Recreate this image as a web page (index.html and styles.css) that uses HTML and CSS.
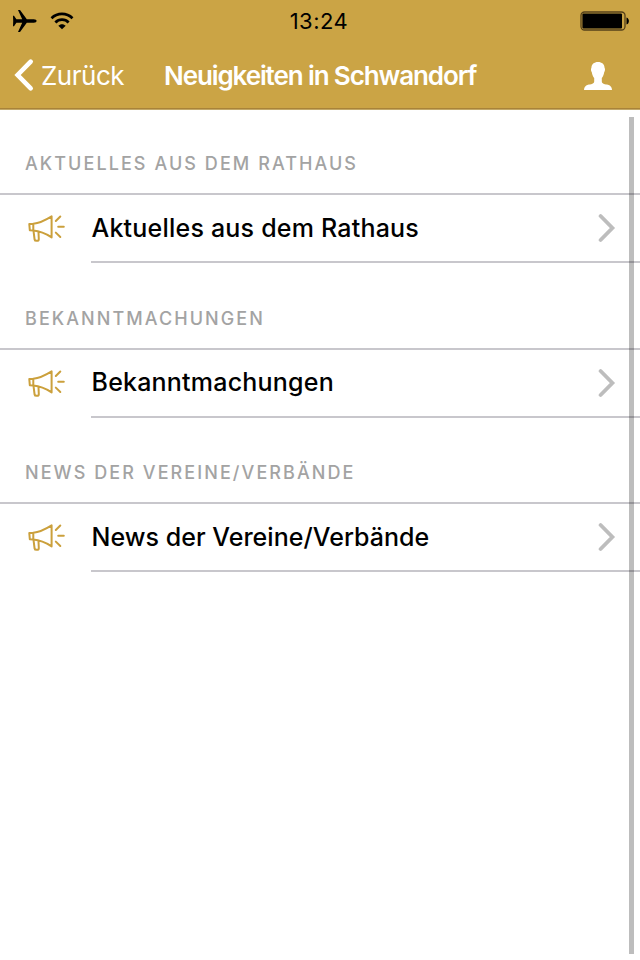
FILE: index.html
```html
<!DOCTYPE html>
<html lang="de">
<head>
    <meta charset="UTF-8">
    <meta name="viewport" content="width=device-width, initial-scale=1.0">
    <title>Neuigkeiten in Schwandorf</title>
    <link rel="stylesheet" href="styles.css">
</head>
<body>

    <!-- Symbole -->
    <svg class="symbols" width="0" height="0">
        <symbol id="megaphone" viewBox="0 0 38 28">
            <path d="M1.3 9.1L5.3 8.8V15.6L1.8 15.2ZM5.3 8.8C11.5 8.3 17 5.5 23.6 1.4V22.4C17.5 18.5 11.5 16.2 5.3 15.6M5.5 15.8L6.6 24.5C6.8 26.4 10.9 26.3 10.8 24.2L10.5 17.2M27.8 6L32.3 1.5M30.2 11.7H35.8M27.8 17.6L32.3 22"/>
        </symbol>
        <symbol id="chevron" viewBox="0 0 18 30">
            <path d="M2.6 3L14.4 15L2.6 27"/>
        </symbol>
    </svg>

    <header class="header">
        <div class="status-bar">
            <div class="status-left">
                <svg class="plane" width="26" height="24" viewBox="0 0 26 24">
                    <path d="M1 6.8H2L4.4 10.3H10.2L6 1H8L14.8 10.3H21.8C23.6 10.3 24.6 11.2 24.6 12C24.6 12.8 23.6 13.7 21.8 13.7H14.8L8 23H6L10.2 13.7H4.4L2 17.2H1L1.2 12Z"/>
                </svg>
                <svg class="wifi" width="24" height="18" viewBox="0 0 24 18">
                    <path class="wave" d="M1.5 6.2C7.4 .5 16.6 .5 22.5 6.2M5.4 10.5C9 6.7 15 6.7 18.6 10.5"/>
                    <path d="M8.3 13.7C10.3 11.6 13.7 11.6 15.7 13.7L12 17.3Z"/>
                </svg>
            </div>
            <div class="time">13:24</div>
            <svg class="battery" width="50" height="20" viewBox="0 0 50 20">
                <rect class="battery-case" x="1" y="1" width="44" height="18" rx="3.5"/>
                <rect x="2.4" y="2.4" width="39.6" height="15" rx="1"/>
                <path d="M46.5 6.5C49.7 7.5 49.7 12.5 46.5 13.5Z"/>
            </svg>
        </div>
        <nav class="nav-bar">
            <a class="back" href="#">
                <svg class="back-arrow" width="22" height="34" viewBox="0 0 22 34">
                    <path d="M18.7 3.6L5.6 17L18.7 30.4"/>
                </svg>
                <span>Zurück</span>
            </a>
            <h1>Neuigkeiten in Schwandorf</h1>
            <svg class="profile" width="28" height="28" viewBox="0 0 28 28">
                <path d="M14 0C17.9 0 20.6 2.3 20.6 6C21.4 6.8 21 9.3 20.2 10.2C19.8 12.8 19 14.6 17.8 16V19.5C18 22.3 21.4 22.1 24 22.8C26.8 23.6 27.8 25.3 28 28H0C.2 25.3 1.2 23.6 4 22.8C6.6 22.1 10 22.3 10.2 19.5V16C9 14.6 8.2 12.8 7.8 10.2C7 9.3 6.6 6.8 7.4 6C7.4 2.3 10.1 0 14 0Z"/>
            </svg>
        </nav>
    </header>

    <main class="list">
        <section class="group">
            <h2>Aktuelles aus dem Rathaus</h2>
            <a class="row" href="#">
                <svg class="megaphone"><use href="#megaphone"/></svg>
                <span class="label">
                    <span class="text">Aktuelles aus dem Rathaus</span>
                    <svg class="chevron"><use href="#chevron"/></svg>
                </span>
            </a>
        </section>
        <section class="group">
            <h2>Bekanntmachungen</h2>
            <a class="row" href="#">
                <svg class="megaphone"><use href="#megaphone"/></svg>
                <span class="label">
                    <span class="text">Bekanntmachungen</span>
                    <svg class="chevron"><use href="#chevron"/></svg>
                </span>
            </a>
        </section>
        <section class="group">
            <h2>News der Vereine/Verbände</h2>
            <a class="row" href="#">
                <svg class="megaphone"><use href="#megaphone"/></svg>
                <span class="label">
                    <span class="text text-tight">News der Vereine/Verbände</span>
                    <svg class="chevron"><use href="#chevron"/></svg>
                </span>
            </a>
        </section>
    </main>

    <div class="scrollbar"></div>

</body>
</html>
```
FILE: styles.css
```css
* {
    box-sizing: border-box;
}
body {
    margin: 0;
    height: 960px;
    overflow: hidden;
    background-color: #fff;
    color: #000;
    font-family: Inter, "Liberation Sans", sans-serif;
}
a {
    color: inherit;
    text-decoration: none;
}
svg {
    display: block;
    flex: none;
}
.symbols {
    position: absolute;
}

/* Kopfbereich */
.header {
    height: 110px;
    background-color: #cba445;
    border-bottom: 1px solid #c2a868;
    box-shadow: inset 0 -1px #a98339;
}
.status-bar {
    display: grid;
    grid-template-columns: 1fr auto 1fr;
    align-items: center;
    height: 40px;
    padding: 1px 10px 0 12px;
}
.status-left {
    display: flex;
    align-items: center;
    gap: 12px;
}
.time {
    margin-right: 4px;
    font-size: 22px;
    letter-spacing: 0.5px;
}
.battery {
    justify-self: end;
}
.battery-case {
    fill: none;
    stroke: #55401a;
    stroke-width: 1.3;
}
.wave {
    fill: none;
    stroke: #000;
    stroke-width: 2.7;
}
.nav-bar {
    display: grid;
    grid-template-columns: 152px 1fr 28px;
    align-items: center;
    height: 68px;
    padding: 2px 28px 0 12px;
    color: #fff;
}
.back {
    display: flex;
    align-items: center;
    gap: 7px;
    font-size: 26px;
    letter-spacing: -0.5px;
}
.back-arrow path {
    fill: none;
    stroke: #fff;
    stroke-width: 4.6;
    stroke-linecap: round;
}
.profile {
    margin-top: 2px;
    fill: #fff;
}
h1 {
    margin: 0;
    font-size: 26px;
    font-weight: 600;
    letter-spacing: -1.11px;
    white-space: nowrap;
}

/* Liste */
.group {
    height: 154.67px;
}
h2 {
    display: flex;
    align-items: flex-end;
    height: 85px;
    margin: 0;
    padding: 0 25px 19px;
    border-bottom: 2px solid #c8c7cc;
    color: #a3a3a3;
    font-size: 18px;
    font-weight: 500;
    letter-spacing: 2.07px;
    text-transform: uppercase;
}
.row {
    display: flex;
    height: 68px;
}
.megaphone {
    width: 38px;
    height: 28px;
    margin: 20px 25px 0 28px;
    fill: none;
    stroke: #cba03c;
    stroke-width: 2;
    stroke-linejoin: round;
    stroke-linecap: round;
}
.label {
    display: flex;
    flex: 1;
    align-items: center;
    justify-content: space-between;
    padding-right: 24px;
    border-bottom: 2px solid #c8c7cc;
    font-size: 25px;
    font-weight: 500;
    white-space: nowrap;
}
.text {
    padding: 0 0 1px 0.5px;
    letter-spacing: 0.21px;
}
.text-tight {
    letter-spacing: 0.03px;
}
.chevron {
    width: 18px;
    height: 30px;
    fill: none;
    stroke: #bdbdbd;
    stroke-width: 3.8;
    stroke-linecap: round;
}

/* Scrollbalken über der Liste */
.scrollbar {
    position: absolute;
    top: 117px;
    right: 6px;
    width: 5px;
    height: 837px;
    background-color: rgba(0, 0, 0, 0.26);
}
```
